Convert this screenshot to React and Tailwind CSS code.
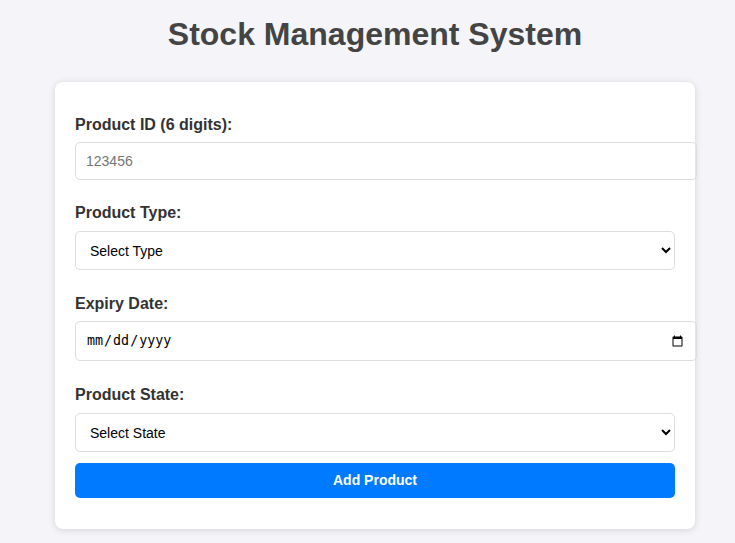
export default function App() {
  return (
    <div
      className="min-h-[543px] bg-[#f4f4f9] pl-[15px] pt-[16px] text-[#333]"
      style={{ fontFamily: '"Liberation Sans", Arial, sans-serif' }}
    >
      <h1 className="text-center text-[32px] font-bold leading-[37px] text-[#444]">
        Stock Management System
      </h1>
      <div className="mx-auto mt-[29px] w-[640px] rounded-[8px] bg-white px-[20px] pt-[34px] pb-[30.6px] shadow-[0_1px_7px_rgba(0,0,0,0.14)]">
        <label className="block text-[16px] font-bold leading-[18.4px] mb-[8px]">
          Product ID (6 digits):
        </label>
        <input
          type="text"
          placeholder="123456"
          className="box-border block h-[38px] w-[calc(100%+22px)] rounded-[5px] border border-[#ddd] px-[10px] text-[14px] text-black placeholder:text-[#757575] outline-none"
        />
        <label className="mt-[23.6px] block text-[16px] font-bold leading-[18.4px] mb-[9px]">
          Product Type:
        </label>
        <select className="box-border block h-[39px] w-full rounded-[5px] border border-[#ddd] bg-white px-[10px] text-[14px] text-black outline-none">
          <option>Select Type</option>
        </select>
        <label className="mt-[24.2px] block text-[16px] font-bold leading-[18.4px] mb-[8.4px]">
          Expiry Date:
        </label>
        <input
          type="date"
          className="box-border block h-[40px] w-[calc(100%+22px)] rounded-[5px] border border-[#ddd] px-[10px] text-[13.33px] text-black outline-none"
          style={{ fontFamily: 'monospace' }}
        />
        <label className="mt-[24.4px] block text-[16px] font-bold leading-[18.4px] mb-[8.8px]">
          Product State:
        </label>
        <select className="box-border block h-[39.4px] w-full rounded-[5px] border border-[#ddd] bg-white px-[10px] text-[14px] text-black outline-none">
          <option>Select State</option>
        </select>
        <button className="mt-[10.6px] block h-[35.4px] w-full rounded-[5px] bg-[#007bff] text-[14px] font-bold text-white">
          Add Product
        </button>
      </div>
    </div>
  );
}
